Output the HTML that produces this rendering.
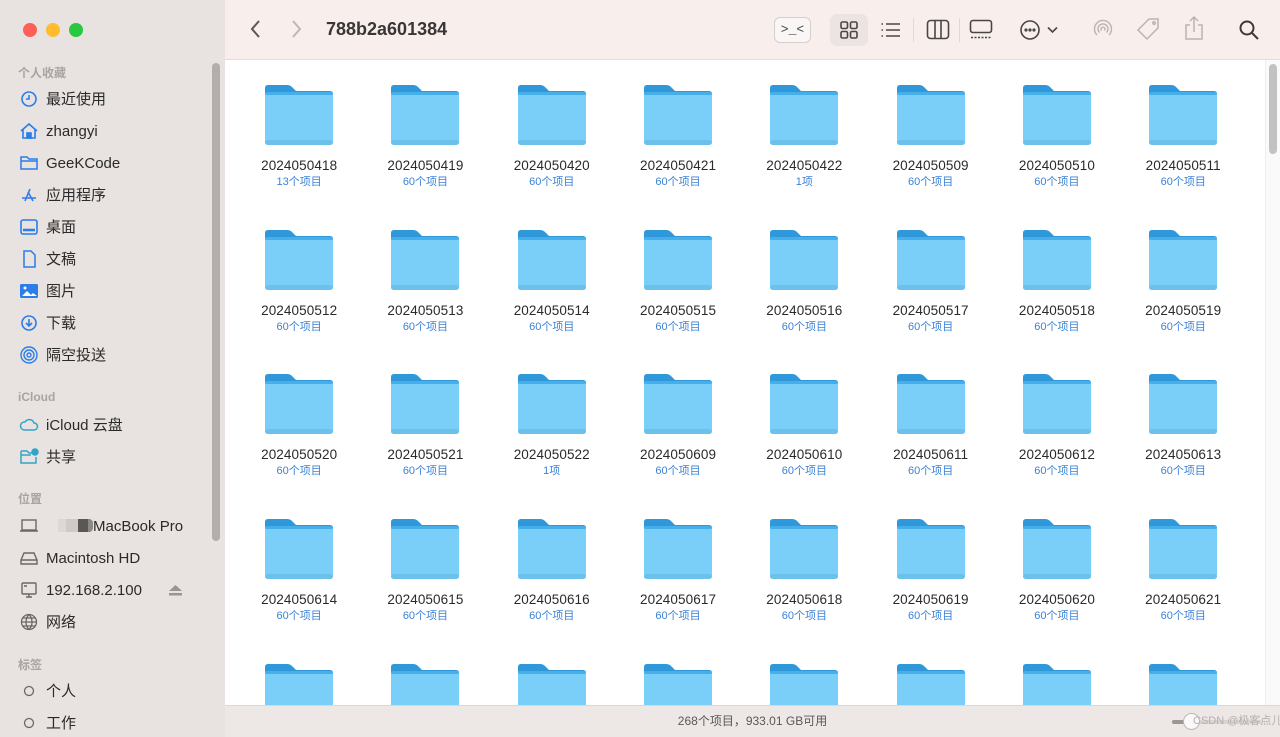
<!DOCTYPE html>
<html><head><meta charset="utf-8"><style>
*{margin:0;padding:0;box-sizing:border-box}
html,body{width:1280px;height:737px;overflow:hidden}
body{background:#e6e0de;font-family:"Liberation Sans","Noto Sans CJK SC",sans-serif;position:relative}
.side{position:absolute;left:0;top:0;width:225px;height:737px;background:#e8e2e0}
.dot{position:absolute;top:23px;width:14px;height:14px;border-radius:50%}
.hdr{position:absolute;left:18px;font-size:12px;color:#a9a3a1;font-weight:bold}
.it{position:absolute;left:46px;font-size:15px;color:#2b2a2a;line-height:18px;margin-top:2px}
.ic{position:absolute;left:19px;width:20px;height:18px;margin-top:1px}
.sb{position:absolute;left:212px;top:63px;width:8px;height:478px;border-radius:4px;background:#b3aeac}
.tool{position:absolute;left:225px;top:0;width:1055px;height:60px;background:#f8efed;border-bottom:1px solid #e2dcda}
.main{position:absolute;left:225px;top:60px;width:1055px;height:645px;background:#fff;overflow:hidden}
.grid{position:absolute;left:11px;top:25px;display:grid;grid-template-columns:repeat(8,126.3px);grid-auto-rows:144.7px}
.c{text-align:center;position:relative}
.c svg{display:block;margin:0 auto}
.n{font-size:13.5px;color:#2a2a2a;margin-top:13px;line-height:16px;letter-spacing:0.1px}
.s{font-size:11px;color:#3b82d6;line-height:14px;margin-top:1px}
.vs{position:absolute;right:0;top:0;width:15px;height:645px;background:#fafafa;border-left:1px solid #eee}
.vs div{position:absolute;left:3px;top:4px;width:8px;height:90px;border-radius:4px;background:#c2c2c2}
.status{position:absolute;left:225px;top:705px;width:1055px;height:32px;background:#ede8e6;border-top:1px solid #dcd6d4;font-size:12px;color:#5a5756;text-align:center;line-height:31px;overflow:hidden}
</style></head><body>
<svg width="0" height="0" style="position:absolute"><defs>
<symbol id="f" viewBox="0 0 68 60"><path d="M3 0H22Q25 0 27 2L31 6H65Q68 6 68 9V20H0V3Q0 0 3 0Z" fill="#2f98da"/><rect x="0" y="7" width="68" height="53" rx="3" fill="#79cff7"/><rect x="0" y="7" width="68" height="3" rx="2" fill="#46aee8"/><rect x="0" y="55" width="68" height="5" rx="3" fill="#6cc0ec"/></symbol>
</defs></svg>
<div class="side">
<div class="dot" style="left:23px;background:#fe5f57"></div>
<div class="dot" style="left:46px;background:#febc2e"></div>
<div class="dot" style="left:69px;background:#28c840"></div>
<div class="hdr" style="top:64px">个人收藏</div>
<svg class="ic" style="top:89px" viewBox="0 0 20 18" fill="none" stroke="#2b7de9" stroke-width="1.6"><circle cx="10" cy="9" r="7"/><path d="M10 5v4H7"/></svg><div class="it" style="top:89px">最近使用</div>
<svg class="ic" style="top:121px" viewBox="0 0 20 18" fill="none" stroke="#2b7de9" stroke-width="1.6"><path d="M2 9L10 2l8 7M4 7v9h12V7"/><rect x="8" y="11" width="4" height="5" fill="#2b7de9"/></svg><div class="it" style="top:121px">zhangyi</div>
<svg class="ic" style="top:153px" viewBox="0 0 20 18" fill="none" stroke="#2b7de9" stroke-width="1.5"><path d="M2 3h6l2 2h8v10H2z M2 7h16"/></svg><div class="it" style="top:153px">GeeKCode</div>
<svg class="ic" style="top:185px" viewBox="0 0 20 18" fill="none" stroke="#2b7de9" stroke-width="1.6"><path d="M6 15L11 3M14 15L9 6M3 12h14"/></svg><div class="it" style="top:185px">应用程序</div>
<svg class="ic" style="top:217px" viewBox="0 0 20 18" fill="none" stroke="#2b7de9" stroke-width="1.6"><rect x="2" y="2" width="16" height="14" rx="2"/><path d="M4 12h12" stroke-width="2.5"/></svg><div class="it" style="top:217px">桌面</div>
<svg class="ic" style="top:249px" viewBox="0 0 20 18" fill="none" stroke="#2b7de9" stroke-width="1.5"><path d="M5 1h7l4 4v12H5z"/></svg><div class="it" style="top:249px">文稿</div>
<svg class="ic" style="top:281px" viewBox="0 0 20 18"><rect x="1" y="2" width="18" height="14" rx="1.5" fill="#2b7de9"/><path d="M3 14l5-5 4 4 2-2 4 3z" fill="#fff"/><circle cx="6" cy="6" r="1.5" fill="#fff"/></svg><div class="it" style="top:281px">图片</div>
<svg class="ic" style="top:313px" viewBox="0 0 20 18" fill="none" stroke="#2b7de9" stroke-width="1.6"><circle cx="10" cy="9" r="7"/><path d="M10 5v7M7 9l3 3 3-3"/></svg><div class="it" style="top:313px">下载</div>
<svg class="ic" style="top:345px" viewBox="0 0 20 18" fill="none" stroke="#2b7de9" stroke-width="1.4"><circle cx="10" cy="9" r="8"/><circle cx="10" cy="9" r="5"/><circle cx="10" cy="9" r="2"/></svg><div class="it" style="top:345px">隔空投送</div>
<div class="hdr" style="top:390px">iCloud</div>
<svg class="ic" style="top:415px" viewBox="0 0 20 18" fill="none" stroke="#2fa6c8" stroke-width="1.5"><path d="M5 14h10a3.5 3.5 0 0 0 0-7 5 5 0 0 0-9-1A4 4 0 0 0 5 14z"/></svg><div class="it" style="top:415px">iCloud 云盘</div>
<svg class="ic" style="top:447px" viewBox="0 0 20 18" fill="none" stroke="#2fa6c8" stroke-width="1.5"><path d="M2 3h6l2 2h3M17 9v6H2V3M2 7h10"/><circle cx="16" cy="4" r="3" fill="#2fa6c8"/></svg><div class="it" style="top:447px">共享</div>
<div class="hdr" style="top:490px">位置</div>
<svg class="ic" style="top:516px" viewBox="0 0 20 18" fill="none" stroke="#6b6766" stroke-width="1.4"><rect x="3" y="3" width="14" height="10"/><path d="M1 14h18"/></svg>
<div style="position:absolute;left:58px;top:519px;width:14px;height:13px;background:#ddd8d6"></div><div style="position:absolute;left:66px;top:519px;width:12px;height:13px;background:#cfc9c8"></div><div style="position:absolute;left:78px;top:519px;width:12px;height:13px;background:#5c5757"></div><div style="position:absolute;left:88px;top:519px;width:5px;height:13px;background:#8d8888;border-radius:0 4px 4px 0"></div>
<div class="it" style="top:516px;left:93px">MacBook Pro</div>
<svg class="ic" style="top:548px" viewBox="0 0 20 18" fill="none" stroke="#6b6766" stroke-width="1.4"><path d="M2 11l3-7h10l3 7v4H2zM2 11h16"/></svg><div class="it" style="top:548px">Macintosh HD</div>
<svg class="ic" style="top:580px" viewBox="0 0 20 18" fill="none" stroke="#6b6766" stroke-width="1.4"><rect x="3" y="2" width="14" height="11" rx="1"/><path d="M7 16h6M10 13v3M5 5h3"/></svg><div class="it" style="top:580px">192.168.2.100</div>
<svg style="position:absolute;left:169px;top:585px" width="13" height="11" viewBox="0 0 13 11"><path d="M6.5 0L13 6H0z" fill="#9a9594"/><rect y="8" width="13" height="2.5" fill="#9a9594"/></svg>
<svg class="ic" style="top:612px" viewBox="0 0 20 18" fill="none" stroke="#6b6766" stroke-width="1.3"><circle cx="10" cy="9" r="7.5"/><path d="M2.5 9h15M10 1.5c-4 4-4 11 0 15M10 1.5c4 4 4 11 0 15M4 5h12M4 13h12"/></svg><div class="it" style="top:612px">网络</div>
<div class="hdr" style="top:656px">标签</div>
<svg class="ic" style="top:681px" viewBox="0 0 20 18" fill="none" stroke="#6b6766" stroke-width="1.3"><circle cx="10" cy="9" r="4.5"/></svg><div class="it" style="top:681px">个人</div>
<svg class="ic" style="top:713px" viewBox="0 0 20 18" fill="none" stroke="#6b6766" stroke-width="1.3"><circle cx="10" cy="9" r="4.5"/></svg><div class="it" style="top:713px">工作</div>
<div class="sb"></div>
</div>
<div class="tool">
<svg style="position:absolute;left:24px;top:19px" width="12" height="20" viewBox="0 0 12 20" fill="none" stroke="#5a5656" stroke-width="2"><path d="M10 2L3 10l7 8"/></svg>
<svg style="position:absolute;left:66px;top:19px" width="12" height="20" viewBox="0 0 12 20" fill="none" stroke="#bdb7b6" stroke-width="2"><path d="M2 2l7 8-7 8"/></svg>
<div style="position:absolute;left:101px;top:19px;font-size:18px;font-weight:bold;color:#3a3636">788b2a601384</div>
<div style="position:absolute;left:549px;top:17px;width:37px;height:26px;border:1px solid #d5cfcd;border-radius:6px;background:#f9f6f5;font-family:'Liberation Mono',monospace;font-size:13px;color:#444;text-align:center;line-height:24px">&gt;_&lt;</div>
<div style="position:absolute;left:605px;top:14px;width:38px;height:32px;border-radius:7px;background:#ece4e2"></div>
<svg style="position:absolute;left:614px;top:20px" width="20" height="20" viewBox="0 0 20 20" fill="none" stroke="#4a4646" stroke-width="1.6"><rect x="2" y="2" width="6.5" height="6.5" rx="1.5"/><rect x="11.5" y="2" width="6.5" height="6.5" rx="1.5"/><rect x="2" y="11.5" width="6.5" height="6.5" rx="1.5"/><rect x="11.5" y="11.5" width="6.5" height="6.5" rx="1.5"/></svg>
<svg style="position:absolute;left:655px;top:20px" width="22" height="20" viewBox="0 0 22 20" fill="none" stroke="#4a4646" stroke-width="1.6"><path d="M6 4h14M6 10h14M6 16h14M1.5 4h1.5M1.5 10h1.5M1.5 16h1.5"/></svg>
<div style="position:absolute;left:688px;top:18px;width:1px;height:24px;background:#e0d9d7"></div>
<svg style="position:absolute;left:701px;top:19px" width="24" height="21" viewBox="0 0 24 21" fill="none" stroke="#4a4646" stroke-width="1.6"><rect x="1.5" y="1.5" width="21" height="18" rx="3"/><path d="M9 2v17M15 2v17"/></svg>
<div style="position:absolute;left:734px;top:18px;width:1px;height:24px;background:#e0d9d7"></div>
<svg style="position:absolute;left:744px;top:19px" width="24" height="21" viewBox="0 0 24 21" fill="none" stroke="#4a4646" stroke-width="1.6"><rect x="1.5" y="1.5" width="21" height="12" rx="2.5"/><path d="M2 18.5h20" stroke-dasharray="2 1.5"/></svg>
<svg style="position:absolute;left:794px;top:19px" width="22" height="22" viewBox="0 0 22 22" fill="none" stroke="#4a4646" stroke-width="1.6"><circle cx="11" cy="11" r="9"/><circle cx="7" cy="11" r="0.8" fill="#4a4646"/><circle cx="11" cy="11" r="0.8" fill="#4a4646"/><circle cx="15" cy="11" r="0.8" fill="#4a4646"/></svg>
<svg style="position:absolute;left:822px;top:26px" width="11" height="8" viewBox="0 0 11 8" fill="none" stroke="#4a4646" stroke-width="1.6"><path d="M1 1.5l4.5 4.5L10 1.5"/></svg>
<svg style="position:absolute;left:867px;top:18px" width="22" height="22" viewBox="0 0 22 22" fill="none" stroke="#b9b3b2" stroke-width="1.4"><path d="M5 17a8.5 8.5 0 1 1 12 0M7.5 14.5a5 5 0 1 1 7 0M9.5 12.5a2 2 0 1 1 3 0"/></svg>
<svg style="position:absolute;left:911px;top:17px" width="25" height="25" viewBox="0 0 25 25" fill="none" stroke="#b9b3b2" stroke-width="1.5"><path d="M13 2h9v9L11 22 2 13z"/><circle cx="18" cy="6" r="1.2"/></svg>
<svg style="position:absolute;left:959px;top:15px" width="20" height="26" viewBox="0 0 20 26" fill="none" stroke="#b9b3b2" stroke-width="1.5"><path d="M6 10H2v14h16V10h-4M10 17V2M6 6l4-4 4 4"/></svg>
<svg style="position:absolute;left:1013px;top:19px" width="22" height="22" viewBox="0 0 22 22" fill="none" stroke="#3d3939" stroke-width="2"><circle cx="9" cy="9" r="6.5"/><path d="M14 14l6 6"/></svg>
</div>
<div class="main">
<div class="grid">
<div class="c"><svg width="68" height="60"><use href="#f"/></svg><div class="n">2024050418</div><div class="s">13个项目</div></div>
<div class="c"><svg width="68" height="60"><use href="#f"/></svg><div class="n">2024050419</div><div class="s">60个项目</div></div>
<div class="c"><svg width="68" height="60"><use href="#f"/></svg><div class="n">2024050420</div><div class="s">60个项目</div></div>
<div class="c"><svg width="68" height="60"><use href="#f"/></svg><div class="n">2024050421</div><div class="s">60个项目</div></div>
<div class="c"><svg width="68" height="60"><use href="#f"/></svg><div class="n">2024050422</div><div class="s">1项</div></div>
<div class="c"><svg width="68" height="60"><use href="#f"/></svg><div class="n">2024050509</div><div class="s">60个项目</div></div>
<div class="c"><svg width="68" height="60"><use href="#f"/></svg><div class="n">2024050510</div><div class="s">60个项目</div></div>
<div class="c"><svg width="68" height="60"><use href="#f"/></svg><div class="n">2024050511</div><div class="s">60个项目</div></div>
<div class="c"><svg width="68" height="60"><use href="#f"/></svg><div class="n">2024050512</div><div class="s">60个项目</div></div>
<div class="c"><svg width="68" height="60"><use href="#f"/></svg><div class="n">2024050513</div><div class="s">60个项目</div></div>
<div class="c"><svg width="68" height="60"><use href="#f"/></svg><div class="n">2024050514</div><div class="s">60个项目</div></div>
<div class="c"><svg width="68" height="60"><use href="#f"/></svg><div class="n">2024050515</div><div class="s">60个项目</div></div>
<div class="c"><svg width="68" height="60"><use href="#f"/></svg><div class="n">2024050516</div><div class="s">60个项目</div></div>
<div class="c"><svg width="68" height="60"><use href="#f"/></svg><div class="n">2024050517</div><div class="s">60个项目</div></div>
<div class="c"><svg width="68" height="60"><use href="#f"/></svg><div class="n">2024050518</div><div class="s">60个项目</div></div>
<div class="c"><svg width="68" height="60"><use href="#f"/></svg><div class="n">2024050519</div><div class="s">60个项目</div></div>
<div class="c"><svg width="68" height="60"><use href="#f"/></svg><div class="n">2024050520</div><div class="s">60个项目</div></div>
<div class="c"><svg width="68" height="60"><use href="#f"/></svg><div class="n">2024050521</div><div class="s">60个项目</div></div>
<div class="c"><svg width="68" height="60"><use href="#f"/></svg><div class="n">2024050522</div><div class="s">1项</div></div>
<div class="c"><svg width="68" height="60"><use href="#f"/></svg><div class="n">2024050609</div><div class="s">60个项目</div></div>
<div class="c"><svg width="68" height="60"><use href="#f"/></svg><div class="n">2024050610</div><div class="s">60个项目</div></div>
<div class="c"><svg width="68" height="60"><use href="#f"/></svg><div class="n">2024050611</div><div class="s">60个项目</div></div>
<div class="c"><svg width="68" height="60"><use href="#f"/></svg><div class="n">2024050612</div><div class="s">60个项目</div></div>
<div class="c"><svg width="68" height="60"><use href="#f"/></svg><div class="n">2024050613</div><div class="s">60个项目</div></div>
<div class="c"><svg width="68" height="60"><use href="#f"/></svg><div class="n">2024050614</div><div class="s">60个项目</div></div>
<div class="c"><svg width="68" height="60"><use href="#f"/></svg><div class="n">2024050615</div><div class="s">60个项目</div></div>
<div class="c"><svg width="68" height="60"><use href="#f"/></svg><div class="n">2024050616</div><div class="s">60个项目</div></div>
<div class="c"><svg width="68" height="60"><use href="#f"/></svg><div class="n">2024050617</div><div class="s">60个项目</div></div>
<div class="c"><svg width="68" height="60"><use href="#f"/></svg><div class="n">2024050618</div><div class="s">60个项目</div></div>
<div class="c"><svg width="68" height="60"><use href="#f"/></svg><div class="n">2024050619</div><div class="s">60个项目</div></div>
<div class="c"><svg width="68" height="60"><use href="#f"/></svg><div class="n">2024050620</div><div class="s">60个项目</div></div>
<div class="c"><svg width="68" height="60"><use href="#f"/></svg><div class="n">2024050621</div><div class="s">60个项目</div></div>
<div class="c"><svg width="68" height="60"><use href="#f"/></svg></div>
<div class="c"><svg width="68" height="60"><use href="#f"/></svg></div>
<div class="c"><svg width="68" height="60"><use href="#f"/></svg></div>
<div class="c"><svg width="68" height="60"><use href="#f"/></svg></div>
<div class="c"><svg width="68" height="60"><use href="#f"/></svg></div>
<div class="c"><svg width="68" height="60"><use href="#f"/></svg></div>
<div class="c"><svg width="68" height="60"><use href="#f"/></svg></div>
<div class="c"><svg width="68" height="60"><use href="#f"/></svg></div>
</div>
<div class="vs"><div></div></div>
</div>
<div class="status">268个项目，933.01 GB可用
<div style="position:absolute;left:947px;top:14px;width:90px;height:4px;border-radius:2px;background:#d9d4d2"></div>
<div style="position:absolute;left:947px;top:14px;width:16px;height:4px;border-radius:2px;background:#9c9796"></div>
<div style="position:absolute;left:958px;top:7px;width:17px;height:17px;border-radius:50%;background:#fafafa;border:1px solid #bdb8b6"></div>
<div style="position:absolute;left:968px;top:0;font-size:11px;color:#b5b0ae;white-space:nowrap">CSDN @极客点儿</div>
</div>
</body></html>
